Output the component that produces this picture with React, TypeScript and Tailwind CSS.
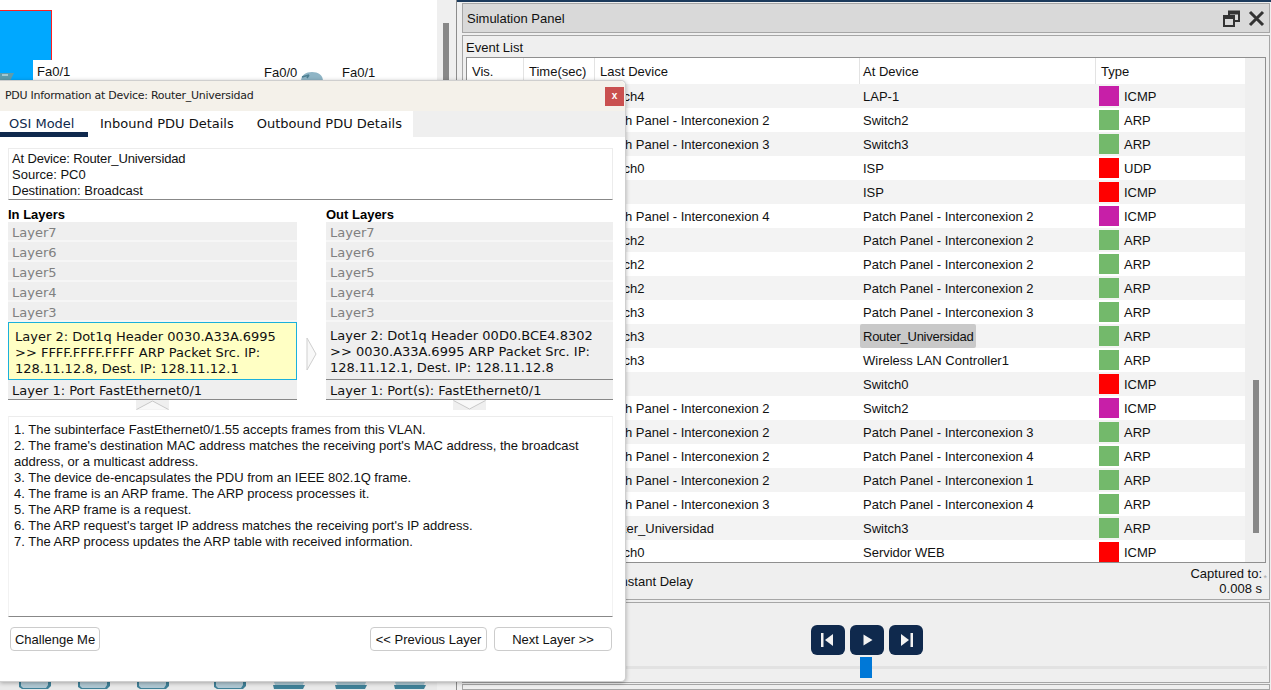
import React from "react";

type Row = [string, string, "m" | "g" | "r", string];
const PP = "Patch Panel - Interconexion ";
const rows: Row[] = [
  ["Switch4", "LAP-1", "m", "ICMP"],
  [PP + "2", "Switch2", "g", "ARP"],
  [PP + "3", "Switch3", "g", "ARP"],
  ["Switch0", "ISP", "r", "UDP"],
  ["", "ISP", "r", "ICMP"],
  [PP + "4", PP + "2", "m", "ICMP"],
  ["Switch2", PP + "2", "g", "ARP"],
  ["Switch2", PP + "2", "g", "ARP"],
  ["Switch2", PP + "2", "g", "ARP"],
  ["Switch3", PP + "3", "g", "ARP"],
  ["Switch3", "Router_Universidad", "g", "ARP"],
  ["Switch3", "Wireless LAN Controller1", "g", "ARP"],
  ["", "Switch0", "r", "ICMP"],
  [PP + "2", "Switch2", "m", "ICMP"],
  [PP + "2", PP + "3", "g", "ARP"],
  [PP + "2", PP + "4", "g", "ARP"],
  [PP + "2", PP + "1", "g", "ARP"],
  [PP + "3", PP + "4", "g", "ARP"],
  ["Router_Universidad", "Switch3", "g", "ARP"],
  ["Switch0", "Servidor WEB", "r", "ICMP"],
];
const swatch = { m: "bg-[#c71fa8]", g: "bg-[#73b96b]", r: "bg-[#ff0000]" };
const dimLayers = ["Layer7", "Layer6", "Layer5", "Layer4", "Layer3"];
const desc = [
  "1. The subinterface FastEthernet0/1.55 accepts frames from this VLAN.",
  "2. The frame's destination MAC address matches the receiving port's MAC address, the broadcast address, or a multicast address.",
  "3. The device de-encapsulates the PDU from an IEEE 802.1Q frame.",
  "4. The frame is an ARP frame. The ARP process processes it.",
  "5. The ARP frame is a request.",
  "6. The ARP request's target IP address matches the receiving port's IP address.",
  "7. The ARP process updates the ARP table with received information.",
];
const wide = "font-['DejaVu_Sans',sans-serif] text-[13px]";

function LayerColumn({ title, l2, l1, active }: { title: string; l2: string; l1: string; active?: boolean }) {
  return (
    <div className="flex flex-col">
      <div className="h-[15px] text-[13px] leading-[15px] font-bold text-black">{title}</div>
      {dimLayers.map((l) => (
        <div key={l} className={`h-[20px] bg-[#efefef] border-b-2 border-[#f6f6f6] pl-[4px] leading-[21px] text-[#808080] ${wide}`}>{l}</div>
      ))}
      <div
        className={`h-[58px] pr-[5px] pt-[6px] leading-[16px] text-[#111] ${wide} ${
          active ? "bg-[#ffffc4] border border-[#1bb0dc] pl-[6px]" : "bg-[#efefef] border-b border-[#888] pl-[4px]"
        }`}
      >
        {l2}
      </div>
      <div className={`h-[20px] bg-[#efefef] border-b border-[#888] pl-[4px] leading-[21px] text-[#111] ${wide}`}>{l1}</div>
    </div>
  );
}

function Chevron({ dir }: { dir: "up" | "down" }) {
  return (
    <div className="w-[33px] h-[10px] bg-[#efefef]">
      <svg width="33" height="10" viewBox="0 0 33 10">
        <path d={dir === "up" ? "M0.5 9.5 L16.5 1 L32.5 9.5" : "M0.5 0.5 L16.5 9 L32.5 0.5"} fill="#f8f8f8" stroke="#c8c8c8" />
      </svg>
    </div>
  );
}

function CtrlBtn({ children }: { children: React.ReactNode }) {
  return (
    <div className="w-[34px] h-[30px] rounded-[6px] bg-[#0f294d] flex items-center justify-center">
      <svg width="20" height="20" viewBox="0 0 20 20" fill="#f2f2f2">{children}</svg>
    </div>
  );
}

function DevIcon({ flat }: { flat?: boolean }) {
  return flat ? (
    <svg width="32" height="8" viewBox="0 0 32 8" className="block">
      <path d="M1 0h30l-1 3H2z" fill="#a9c4cf" />
      <path d="M0 3h32l-2 4H1z" fill="#3f8097" />
    </svg>
  ) : (
    <svg width="32" height="8" viewBox="0 0 32 8" className="block">
      <path d="M0 0h32v4l-3 3H3L0 5z" fill="#3f8097" />
      <path d="M2 0h27v3l-2 3H4L2 4z" fill="#afc7d2" />
    </svg>
  );
}

export default function App() {
  return (
    <div className="relative w-[1271px] h-[690px] overflow-hidden bg-[#efefef] flex font-['Liberation_Sans',Arial,sans-serif] text-[13px] text-[#111]">
      <div className="absolute top-0 left-0 right-0 h-[2px] bg-[#1b3a5c]" />
      {/* left workspace */}
      <div className="relative w-[457px] h-full flex border-r border-[#8c8c8c] shrink-0">
        <div className="w-[437px] h-full bg-white flex flex-col">
          <div className="flex-1" />
          <div className="h-[8px] bg-[#e9e9e9] relative">
            {[19, 78, 137, 214, 273, 335, 394].map((x, i) => (
              <div key={x} className="absolute top-0" style={{ left: x }}>
                <DevIcon flat={i > 3} />
              </div>
            ))}
          </div>
        </div>
        <div className="w-[19px] h-full bg-[#efefef] pt-[23px] pl-[6px]">
          <div className="w-[6px] h-[300px] bg-[#888]" />
        </div>
        <div className="absolute left-0 top-[10px] w-[52px] h-[70px] bg-[#00a8ff] border-t border-r border-[#ff2020]" />
        <div className="absolute left-[33px] top-[60px] w-[40px] h-[20px] bg-white pl-[4px] pt-[5px] leading-[14px]">Fa0/1</div>
        <svg width="14" height="8" viewBox="0 0 14 8" className="absolute left-0 top-[73px]">
          <path d="M0 0h14l-4 8H0z" fill="#5f9cab" />
          <path d="M2 2h6" stroke="#e8f2f5" strokeWidth="1" />
        </svg>
        <div className="absolute left-[264px] top-[66px] leading-[14px]">Fa0/0</div>
        <svg width="22" height="9" viewBox="0 0 22 9" className="absolute left-[301px] top-[72px]">
          <path d="M0 9C0 3 5 0 11 0s11 3 11 9z" fill="#8fb5c6" />
          <path d="M1 5l7-2M8 3l-2 3" stroke="#4d7f92" strokeWidth="1.500" fill="none" />
        </svg>
        <div className="absolute left-[342px] top-[66px] leading-[14px]">Fa0/1</div>
      </div>

      {/* right panels */}
      <div className="ml-[5px] w-[808px] h-full flex flex-col pt-[3px]">
        <div className="h-[30px] shrink-0 bg-[#d9d9d9] border border-[#a6a6a6] flex items-center justify-between pl-[4px] pr-[4px] text-[#111]">
          <span className="pt-[1px]">Simulation Panel</span>
          <div className="flex items-center gap-[8px]">
            <svg width="17" height="17" viewBox="0 0 17 17" fill="none" stroke="#333" strokeWidth="2">
              <rect x="1" y="6" width="10" height="10" />
              <path d="M1 7.500h10" strokeWidth="3" />
              <path d="M6 5V1.500h10V11h-4.500" />
              <path d="M6 3h10" strokeWidth="3" />
            </svg>
            <svg width="17" height="17" viewBox="0 0 17 17" fill="none" stroke="#333" strokeWidth="3">
              <path d="M2 2l13 13M15 2L2 15" />
            </svg>
          </div>
        </div>
        <div className="mt-[2px] h-[565px] shrink-0 border border-[#a6a6a6] flex flex-col pl-[3px] pr-[3px]">
          <div className="h-[21px] leading-[23px] shrink-0">Event List</div>
          <div className="h-[506px] shrink-0 border border-[#8f8f8f] bg-[#efefef] flex relative overflow-hidden">
            <div className="w-[778px] shrink-0 bg-white">
              <div className="flex h-[26px] leading-[27px] bg-white">
                <div className="w-[57px] pl-[5px] border-r border-[#e3e3e3]">Vis.</div>
                <div className="w-[71px] pl-[5px] border-r border-[#e3e3e3]">Time(sec)</div>
                <div className="w-[265px] pl-[5px] border-r border-[#e3e3e3]">Last Device</div>
                <div className="w-[236px] pl-[3px] border-r border-[#e3e3e3]">At Device</div>
                <div className="flex-1 pl-[5px]">Type</div>
              </div>
              {rows.map((r, i) => (
                <div key={i} className={`flex h-[24px] leading-[25px] ${i % 2 === 0 ? "bg-[#f3f3f3]" : "bg-white"}`}>
                  <div className="w-[128px]" />
                  <div className="w-[265px] pl-[4px] whitespace-nowrap">{r[0]}</div>
                  <div className="w-[236px] whitespace-nowrap">
                    {r[1] === "Router_Universidad" ? (
                      <span className="inline-block h-[24px] bg-[#c9c9c9] rounded-[2px] pl-[3px] pr-[3px] tracking-[-0.25px]">{r[1]}</span>
                    ) : (
                      <span className="pl-[3px]">{r[1]}</span>
                    )}
                  </div>
                  <div className="flex-1 flex items-center pl-[3px] gap-[5px]">
                    <span className={`w-[20px] h-[20px] ${swatch[r[2]]}`} />
                    <span>{r[3]}</span>
                  </div>
                </div>
              ))}
            </div>
            <div className="flex-1 pt-[322px] pl-[8px]">
              <div className="w-[6px] h-[153px] bg-[#888]" />
            </div>
          </div>
          <div className="relative flex-1 flex items-center">
            <span className="ml-[138px] pt-[1px]">Constant Delay</span>
            <div className="absolute right-[4px] top-[3px] text-right leading-[15px]">
              Captured to:
              <br />0.008 s
            </div>
            <span className="absolute right-[-1px] top-[11px] text-[9px] leading-[9px] text-[#aaa]">*</span>
          </div>
        </div>
        <div className="mt-[2px] h-[81px] shrink-0 border border-[#a6a6a6] relative flex flex-col items-center">
          <div className="flex gap-[5px] mt-[22px] ml-[1px]">
            <CtrlBtn>
              <rect x="3" y="3" width="2.500" height="14" />
              <path d="M15 4v12l-8-6z" />
            </CtrlBtn>
            <CtrlBtn>
              <path d="M6.500 4.500v11l9-5.500z" />
            </CtrlBtn>
            <CtrlBtn>
              <rect x="14.500" y="3" width="2.500" height="14" />
              <path d="M5 4v12l8-6z" />
            </CtrlBtn>
          </div>
          <div className="absolute left-[161px] right-[2px] top-[63px] h-[3px] bg-[#e2e2e2]" />
          <div className="absolute left-[397px] top-[54px] w-[12px] h-[21px] bg-[#0078d7]" />
        </div>
        <div className="mt-[1px] flex-1 border border-[#a6a6a6]" />
      </div>

      {/* PDU dialog */}
      <div className="absolute left-0 top-[80px] w-[626px] h-[602px] bg-white rounded-br-[5px] rounded-tr-[5px] border border-l-0 border-[#cfcfcf] shadow-[0_1px_4px_rgba(0,0,0,0.3)] flex flex-col">
        <div className="h-[30px] shrink-0 bg-[#f4f1ea] flex items-center justify-between pl-[5px] pr-[1px] rounded-tr-[5px]">
          <span className="font-['DejaVu_Sans',sans-serif] text-[11px] tracking-[-0.27px] text-[#222]">PDU Information at Device: Router_Universidad</span>
          <div className="w-[19px] h-[19px] bg-[#c9504f] text-white font-bold text-[10px] leading-[17px] text-center">x</div>
        </div>
        <div className="h-[26px] shrink-0 bg-[#efefef] flex">
          <div className={`w-[88px] h-[26px] bg-white border-b-[5px] border-[#0f294d] pl-[9px] leading-[26px] text-[#0f294d] ${wide}`}>OSI Model</div>
          <div className={`w-[325px] bg-white flex pl-[12px] gap-[23px] leading-[26px] ${wide}`}>
            <span>Inbound PDU Details</span>
            <span>Outbound PDU Details</span>
          </div>
        </div>
        <div className="flex-1 flex flex-col px-[8px] pt-[11px]">
          <div className="h-[52px] w-[605px] shrink-0 border-t border-x border-[#ececec] border-b border-b-[#888] pl-[3px] pt-[2px] leading-[16px]">
            <div className="tracking-[-0.15px]">At Device: Router_Universidad</div>
            <div>Source: PC0</div>
            <div>Destination: Broadcast</div>
          </div>
          <div className="mt-[7px] w-[605px] flex shrink-0">
            <div className="w-[289px]">
              <LayerColumn title="In Layers" active l2="Layer 2: Dot1q Header 0030.A33A.6995 >> FFFF.FFFF.FFFF ARP Packet Src. IP: 128.11.12.8, Dest. IP: 128.11.12.1" l1="Layer 1: Port FastEthernet0/1" />
              <div className="flex justify-center ml-[-1px]"><Chevron dir="up" /></div>
            </div>
            <div className="w-[29px] flex items-center justify-center pb-[10px]">
              <svg width="11" height="34" viewBox="0 0 11 34" className="mt-[100px]">
                <path d="M1 1 L10 17 L1 33 Z" fill="#f8f8f8" stroke="#cfcfcf" />
              </svg>
            </div>
            <div className="w-[287px]">
              <LayerColumn title="Out Layers" l2="Layer 2: Dot1q Header 00D0.BCE4.8302 >> 0030.A33A.6995 ARP Packet Src. IP: 128.11.12.1, Dest. IP: 128.11.12.8" l1="Layer 1: Port(s): FastEthernet0/1" />
              <div className="flex justify-center"><Chevron dir="down" /></div>
            </div>
          </div>
          <div className="mt-[6px] h-[201px] w-[605px] shrink-0 border-t border-[#ececec] border-x border-x-[#f2f2f2] border-b border-b-[#888] pl-[5px] pr-[20px] pt-[5px] leading-[16px]">
            {desc.map((d) => (
              <div key={d}>{d}</div>
            ))}
          </div>
          <div className="mt-[10px] flex justify-between pl-[2px] pr-[1px] w-[605px]">
            <button className="w-[90px] h-[24px] border border-[#ccc] rounded-[4px] bg-white pt-[1px]">Challenge Me</button>
            <div className="flex gap-[7px]">
              <button className="w-[117px] h-[24px] border border-[#ccc] rounded-[4px] bg-white pt-[1px]">{"<< Previous Layer"}</button>
              <button className="w-[118px] h-[24px] border border-[#ccc] rounded-[4px] bg-white pt-[1px]">{"Next Layer >>"}</button>
            </div>
          </div>
        </div>
      </div>
    </div>
  );
}
